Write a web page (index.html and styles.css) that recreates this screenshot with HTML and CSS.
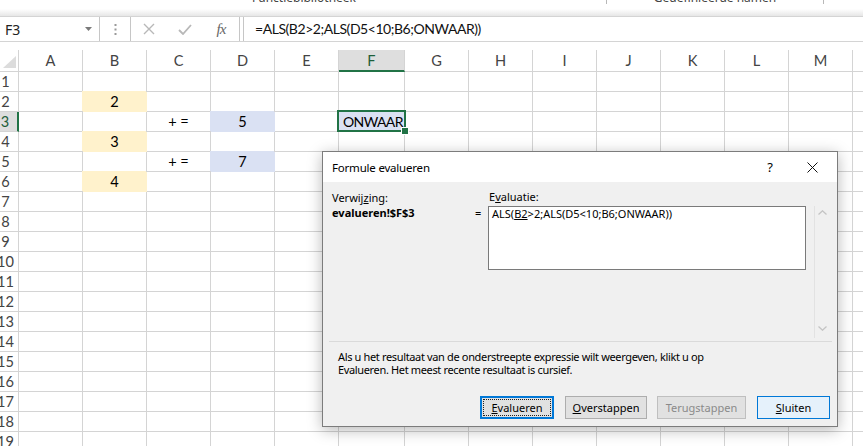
FILE: index.html
```html
<!DOCTYPE html>
<html lang="nl">
<head>
<meta charset="utf-8">
<title>Formule evalueren</title>
<link rel="stylesheet" href="styles.css">
</head>
<body>
<div class="ribbon">
  <div class="rib-group rib-g1"><span class="rib-label">Functiebibliotheek</span></div>
  <span class="rib-sep"></span>
  <div class="rib-group rib-g2"><span class="rib-label">Gedefinieerde namen</span></div>
  <span class="rib-sep"></span>
</div>
<div class="fbar">
  <div class="namebox"><span>F3</span>
    <svg class="caret" width="7" height="4" viewBox="0 0 7 4"><polygon points="0,0 7,0 3.5,4" fill="#7a7a7a"/></svg>
  </div>
  <div class="fdots"><svg width="3" height="11" viewBox="0 0 3 11"><rect x="0.5" y="0" width="2" height="2" fill="#9a9a9a"/><rect x="0.5" y="4.5" width="2" height="2" fill="#9a9a9a"/><rect x="0.5" y="9" width="2" height="2" fill="#9a9a9a"/></svg></div>
  <div class="fbtns">
    <span class="fslot"><svg width="12" height="12" viewBox="0 0 12 12"><path d="M1 1L11 11M11 1L1 11" stroke="#b8b8b8" stroke-width="1.4" fill="none"/></svg></span>
    <span class="fslot"><svg width="14" height="11" viewBox="0 0 14 11"><path d="M1 6L5 10L13 1" stroke="#b8b8b8" stroke-width="1.8" fill="none"/></svg></span>
    <span class="fslot fx">fx</span>
  </div>
  <div class="finput">=ALS(B2&gt;2;ALS(D5&lt;10;B6;ONWAAR))</div>
</div>
<div class="gap"></div>
<div class="sheet">
  <div class="hc corner"><span class="tri"></span></div><div class="hc">A</div><div class="hc">B</div><div class="hc">C</div><div class="hc">D</div><div class="hc">E</div><div class="hc hc-sel">F</div><div class="hc">G</div><div class="hc">H</div><div class="hc">I</div><div class="hc">J</div><div class="hc">K</div><div class="hc">L</div><div class="hc">M</div><div class="hc">N</div>

  <div class="rh">1</div><div class="c"></div><div class="c"></div><div class="c"></div><div class="c"></div><div class="c"></div><div class="c"></div><div class="c"></div><div class="c"></div><div class="c"></div><div class="c"></div><div class="c"></div><div class="c"></div><div class="c"></div><div class="c"></div>
  <div class="rh">2</div><div class="c"></div><div class="c fill-y">2</div><div class="c"></div><div class="c"></div><div class="c"></div><div class="c"></div><div class="c"></div><div class="c"></div><div class="c"></div><div class="c"></div><div class="c"></div><div class="c"></div><div class="c"></div><div class="c"></div>
  <div class="rh rh-sel">3</div><div class="c"></div><div class="c"></div><div class="c">+ =</div><div class="c fill-b">5</div><div class="c"></div><div class="c fill-b sel">ONWAAR</div><div class="c"></div><div class="c"></div><div class="c"></div><div class="c"></div><div class="c"></div><div class="c"></div><div class="c"></div><div class="c"></div>
  <div class="rh">4</div><div class="c"></div><div class="c fill-y">3</div><div class="c"></div><div class="c"></div><div class="c"></div><div class="c"></div><div class="c"></div><div class="c"></div><div class="c"></div><div class="c"></div><div class="c"></div><div class="c"></div><div class="c"></div><div class="c"></div>
  <div class="rh">5</div><div class="c"></div><div class="c"></div><div class="c">+ =</div><div class="c fill-b">7</div><div class="c"></div><div class="c"></div><div class="c"></div><div class="c"></div><div class="c"></div><div class="c"></div><div class="c"></div><div class="c"></div><div class="c"></div><div class="c"></div>
  <div class="rh">6</div><div class="c"></div><div class="c fill-y">4</div><div class="c"></div><div class="c"></div><div class="c"></div><div class="c"></div><div class="c"></div><div class="c"></div><div class="c"></div><div class="c"></div><div class="c"></div><div class="c"></div><div class="c"></div><div class="c"></div>
  <div class="rh">7</div><div class="c"></div><div class="c"></div><div class="c"></div><div class="c"></div><div class="c"></div><div class="c"></div><div class="c"></div><div class="c"></div><div class="c"></div><div class="c"></div><div class="c"></div><div class="c"></div><div class="c"></div><div class="c"></div>
  <div class="rh">8</div><div class="c"></div><div class="c"></div><div class="c"></div><div class="c"></div><div class="c"></div><div class="c"></div><div class="c"></div><div class="c"></div><div class="c"></div><div class="c"></div><div class="c"></div><div class="c"></div><div class="c"></div><div class="c"></div>
  <div class="rh">9</div><div class="c"></div><div class="c"></div><div class="c"></div><div class="c"></div><div class="c"></div><div class="c"></div><div class="c"></div><div class="c"></div><div class="c"></div><div class="c"></div><div class="c"></div><div class="c"></div><div class="c"></div><div class="c"></div>
  <div class="rh">10</div><div class="c"></div><div class="c"></div><div class="c"></div><div class="c"></div><div class="c"></div><div class="c"></div><div class="c"></div><div class="c"></div><div class="c"></div><div class="c"></div><div class="c"></div><div class="c"></div><div class="c"></div><div class="c"></div>
  <div class="rh">11</div><div class="c"></div><div class="c"></div><div class="c"></div><div class="c"></div><div class="c"></div><div class="c"></div><div class="c"></div><div class="c"></div><div class="c"></div><div class="c"></div><div class="c"></div><div class="c"></div><div class="c"></div><div class="c"></div>
  <div class="rh">12</div><div class="c"></div><div class="c"></div><div class="c"></div><div class="c"></div><div class="c"></div><div class="c"></div><div class="c"></div><div class="c"></div><div class="c"></div><div class="c"></div><div class="c"></div><div class="c"></div><div class="c"></div><div class="c"></div>
  <div class="rh">13</div><div class="c"></div><div class="c"></div><div class="c"></div><div class="c"></div><div class="c"></div><div class="c"></div><div class="c"></div><div class="c"></div><div class="c"></div><div class="c"></div><div class="c"></div><div class="c"></div><div class="c"></div><div class="c"></div>
  <div class="rh">14</div><div class="c"></div><div class="c"></div><div class="c"></div><div class="c"></div><div class="c"></div><div class="c"></div><div class="c"></div><div class="c"></div><div class="c"></div><div class="c"></div><div class="c"></div><div class="c"></div><div class="c"></div><div class="c"></div>
  <div class="rh">15</div><div class="c"></div><div class="c"></div><div class="c"></div><div class="c"></div><div class="c"></div><div class="c"></div><div class="c"></div><div class="c"></div><div class="c"></div><div class="c"></div><div class="c"></div><div class="c"></div><div class="c"></div><div class="c"></div>
  <div class="rh">16</div><div class="c"></div><div class="c"></div><div class="c"></div><div class="c"></div><div class="c"></div><div class="c"></div><div class="c"></div><div class="c"></div><div class="c"></div><div class="c"></div><div class="c"></div><div class="c"></div><div class="c"></div><div class="c"></div>
  <div class="rh">17</div><div class="c"></div><div class="c"></div><div class="c"></div><div class="c"></div><div class="c"></div><div class="c"></div><div class="c"></div><div class="c"></div><div class="c"></div><div class="c"></div><div class="c"></div><div class="c"></div><div class="c"></div><div class="c"></div>
  <div class="rh">18</div><div class="c"></div><div class="c"></div><div class="c"></div><div class="c"></div><div class="c"></div><div class="c"></div><div class="c"></div><div class="c"></div><div class="c"></div><div class="c"></div><div class="c"></div><div class="c"></div><div class="c"></div><div class="c"></div>
  <div class="rh">19</div><div class="c"></div><div class="c"></div><div class="c"></div><div class="c"></div><div class="c"></div><div class="c"></div><div class="c"></div><div class="c"></div><div class="c"></div><div class="c"></div><div class="c"></div><div class="c"></div><div class="c"></div><div class="c"></div>
</div>

<div class="dialog">
  <div class="dlg-title">
    <span class="dlg-caption">Formule evalueren</span>
    <span class="dlg-ctrl">?</span>
    <span class="dlg-ctrl"><svg width="11" height="11" viewBox="0 0 11 11"><path d="M0.5 0.5L10.5 10.5M10.5 0.5L0.5 10.5" stroke="#111" stroke-width="1" fill="none"/></svg></span>
  </div>
  <div class="dlg-body">
    <div class="dlg-top">
      <div class="ref">
        <div>Verwij<u>z</u>ing:</div>
        <div class="ref-val">evalueren!$F$3</div>
      </div>
      <div class="eq">=</div>
      <div class="eval">
        <div class="eval-label">E<u>v</u>aluatie:</div>
        <div class="eval-box">ALS(<u>B2</u>&gt;2;ALS(D5&lt;10;B6;ONWAAR))</div>
      </div>
      <div class="vscroll">
        <svg width="9" height="5" viewBox="0 0 9 5"><path d="M0.5 4.5L4.5 0.8L8.5 4.5" stroke="#c4c4c4" stroke-width="1.3" fill="none"/></svg>
        <svg width="9" height="5" viewBox="0 0 9 5"><path d="M0.5 0.5L4.5 4.2L8.5 0.5" stroke="#c4c4c4" stroke-width="1.3" fill="none"/></svg>
      </div>
    </div>
    <div class="dlg-sep"></div>
    <p class="dlg-text">Als u het resultaat van de onderstreepte expressie wilt weergeven, klikt u op<br>Evalueren. Het meest recente resultaat is cursief.</p>
    <div class="dlg-btns">
      <span class="btn btn-focus btn-w1"><u>E</u>valueren</span>
      <span class="btn btn-w2"><u>O</u>verstappen</span>
      <span class="btn btn-dis btn-w3">Terugstappen</span>
      <span class="btn btn-def btn-w4"><u>S</u>luiten</span>
    </div>
  </div>
</div>
</body>
</html>
```
FILE: styles.css
```css
* { box-sizing: border-box; }
html, body { margin: 0; padding: 0; }
body {
  width: 863px;
  height: 446px;
  overflow: hidden;
  position: relative;
  background: #fff;
  font-family: Lato, "Noto Sans", sans-serif;
  color: #000;
}

/* ribbon remnant */
.ribbon {
  height: 16px;
  display: flex;
  align-items: flex-start;
  background: linear-gradient(to bottom, #ffffff 9px, #e6e6e6 16px);
  overflow: hidden;
}
.rib-group { height: 5px; overflow: hidden; display: flex; }
.rib-g1 { width: 606px; padding-left: 252px; }
.rib-g2 { width: 216px; justify-content: center; }
.rib-label {
  font: 12px/14px "Noto Sans", sans-serif;
  color: #444;
  margin-top: -9px;
  white-space: nowrap;
}
.rib-sep { width: 1px; height: 4px; background: #b8b8b8; }

/* formula bar */
.fbar {
  height: 26px;
  border-top: 1px solid #d4d4d4;
  border-bottom: 1px solid #d4d4d4;
  display: flex;
  background: #fff;
}
.namebox {
  width: 100px;
  border-right: 1px solid #c6c6c6;
  display: flex;
  align-items: center;
  justify-content: space-between;
  padding: 0 7px 0 5px;
  font: 14px "Noto Sans", sans-serif;
  color: #222;
}
.fdots { width: 30px; display: flex; align-items: center; justify-content: center; }
.fbtns {
  width: 110px;
  border-left: 1px solid #c6c6c6;
  border-right: 1px solid #c6c6c6;
  display: flex;
}
.fslot { width: 36px; display: flex; align-items: center; justify-content: center; }
.fx {
  font: italic 15px "Liberation Serif", serif;
  color: #666;
  letter-spacing: -1px;
}
.finput {
  flex: 1;
  margin-left: 3px;
  border-left: 1px solid #c6c6c6;
  padding-left: 11px;
  font: 14px/24px Lato, sans-serif;
  letter-spacing: -0.45px;
  color: #111;
  white-space: nowrap;
}
.gap { height: 8px; }

/* sheet */
.sheet {
  display: grid;
  margin-left: -7px;
  grid-template-columns: 26px repeat(5, 64px) 66px repeat(7, 64px) 64px;
  grid-template-rows: 22px;
  grid-auto-rows: 20px;
  font: 14.6px Lato, sans-serif;
}
.hc, .rh, .c {
  border-right: 1px solid #d4d4d4;
  border-bottom: 1px solid #d4d4d4;
}
.hc {
  text-align: center;
  line-height: 21px;
  color: #444;
}
.corner {
  display: flex;
  align-items: flex-end;
  justify-content: flex-end;
  padding: 0 2px 3px 0;
}
.tri {
  width: 0;
  height: 0;
  border-left: 13px solid transparent;
  border-bottom: 12px solid #dcdcdc;
}
.hc-sel {
  background: #dedede;
  border-bottom: 2px solid #217346;
  color: #1e5e3a;
}
.rh {
  text-align: center;
  line-height: 19px;
  color: #444;
  font-size: 14.6px;
}
.rh-sel {
  background: #dedede;
  border-right: 2px solid #217346;
  color: #1e5e3a;
}
.c {
  text-align: center;
  line-height: 19px;
  white-space: nowrap;
}
.fill-y { background: #fff2cc; border-color: #fff2cc; box-shadow: -1px -1px 0 0 #fff2cc; }
.fill-b { background: #dae1f3; border-color: #dae1f3; box-shadow: -1px -1px 0 0 #dae1f3; }
.sel {
  position: relative;
  text-align: left;
  padding-left: 4px;
  font-size: 14px;
  letter-spacing: -0.6px;
}
.sel::before {
  content: "";
  position: absolute;
  left: -2px; top: -2px; right: -2px; bottom: -1px;
  border: 2px solid #217346;
}
.sel::after {
  content: "";
  position: absolute;
  right: -5px; bottom: -4px;
  width: 6px; height: 6px;
  background: #217346;
  border: 1px solid #fff;
}

/* dialog */
.dialog {
  position: absolute;
  left: 322px;
  top: 151px;
  width: 516px;
  height: 276px;
  border: 1px solid #7c7c7c;
  background: #f0f0f0;
  box-shadow: 0 3px 14px rgba(0, 0, 0, 0.28);
  display: flex;
  flex-direction: column;
  font: 11px "Noto Sans", sans-serif;
  color: #000;
}
.dlg-title {
  height: 30px;
  background: #fff;
  display: flex;
  align-items: center;
  padding-left: 9px;
  padding-right: 10px;
  font-size: 11.5px;
  letter-spacing: -0.2px;
}
.dlg-caption { flex: 1; }
.dlg-ctrl {
  width: 30px;
  display: flex;
  justify-content: center;
  align-items: center;
  font-size: 13px;
}
.dlg-ctrl + .dlg-ctrl { margin-left: 12px; }
.dlg-body {
  flex: 1;
  padding: 8px 7px 0 9px;
  display: flex;
  flex-direction: column;
}
.dlg-top { display: flex; height: 148px; }
.ref { width: 140px; flex-shrink: 0; line-height: 15px; }
.ref-val { font-weight: bold; }
.eq { width: 16px; flex-shrink: 0; padding: 15px 0 0 3px; line-height: 15px; }
.eval { width: 318px; flex-shrink: 0; }
.eval-label { line-height: 14px; padding-left: 1px; margin-bottom: 2px; }
.eval-box {
  height: 64px;
  background: #fff;
  border: 1px solid #7a7a7a;
  padding: 0 3px;
  line-height: 14px;
}
.vscroll {
  flex-shrink: 0;
  margin-left: 8px;
  margin-right: -7px;
  margin-top: 16px;
  width: 22px;
  height: 132px;
  border-left: 1px solid #e2e2e2;
  display: flex;
  flex-direction: column;
  justify-content: space-between;
  align-items: center;
  padding: 4px 6px 7px 0;
}
.dlg-sep {
  height: 1px;
  background: #dadada;
  margin: 3px -2px 0 -3px;
}
.dlg-text {
  margin: 8px 0 0;
  padding-left: 6px;
  line-height: 13px;
  letter-spacing: -0.35px;
  white-space: nowrap;
}
.dlg-btns {
  display: flex;
  justify-content: flex-end;
  margin-top: 20px;
}
.btn {
  position: relative;
  height: 23px;
  border: 1px solid #adadad;
  background: #e1e1e1;
  text-align: center;
  line-height: 21px;
  white-space: nowrap;
}
.btn-w1 { width: 74px; }
.btn-w2 { width: 82px; margin-left: 11px; }
.btn-w3 { width: 89px; margin-left: 10px; }
.btn-w4 { width: 73px; margin-left: 11px; }
.btn-focus { border: 2px solid #0078d7; line-height: 19px; }
.btn-focus::after {
  content: "";
  position: absolute;
  inset: 1px;
  border: 1px dotted #222;
}
.btn-dis { border-color: #bfbfbf; color: #8a8a8a; }
.btn-def { border-color: #0078d7; background: #e5f1fb; }
```
